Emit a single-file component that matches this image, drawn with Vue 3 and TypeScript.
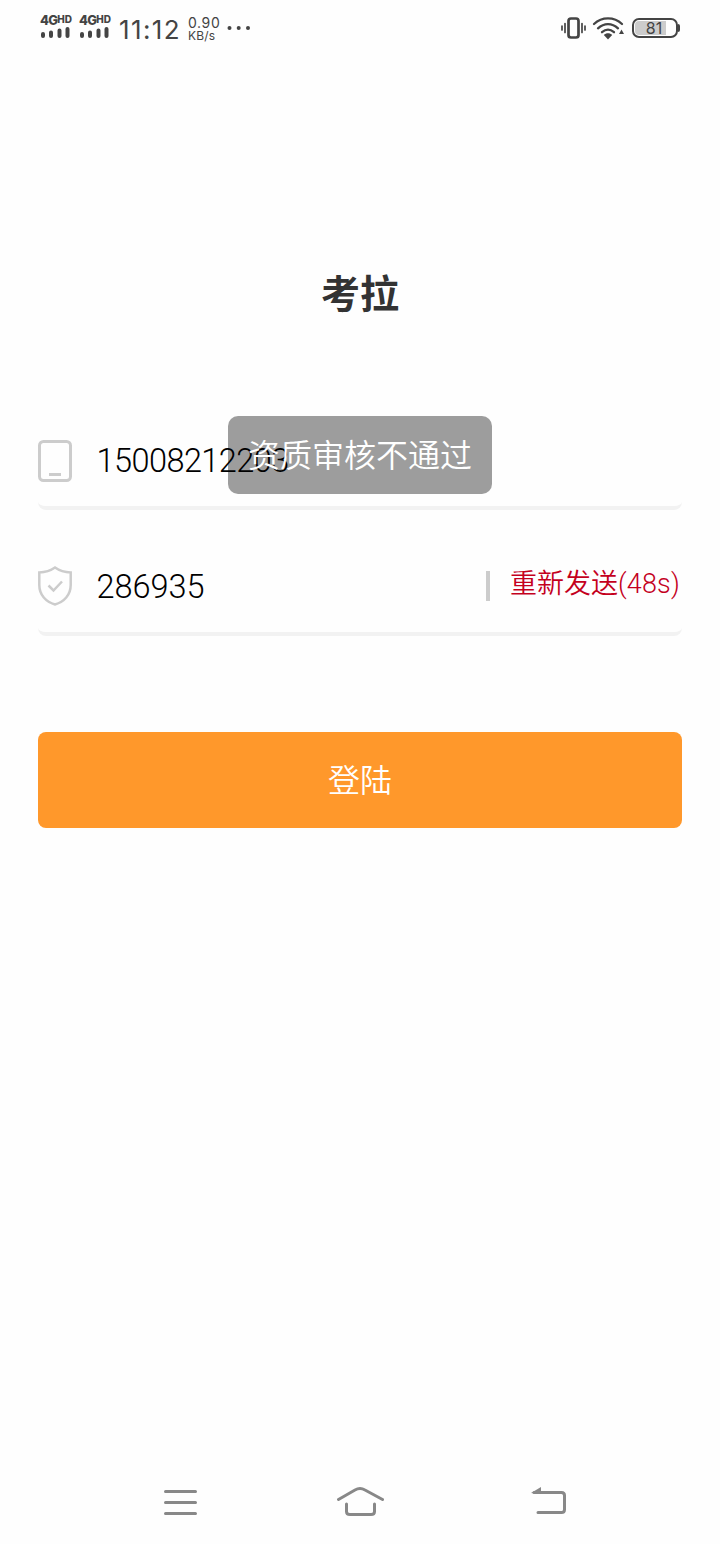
<script setup lang="ts">
import { ref } from 'vue'

const phone = ref('15008212203')
const code = ref('286935')
const secondsLeft = ref(48)
const toast = ref('资质审核不通过')
const sims = [1, 2]
</script>

<template>
  <div class="screen">
    <header class="status">
      <div v-for="sim in sims" :key="sim" class="sim">
        <div class="net">4G<span>HD</span></div>
        <svg width="30" height="14" viewBox="0 0 30 14" fill="none" stroke="#444" stroke-width="4" stroke-linecap="round">
          <path d="M3 9v2M11 7.500v3.500M19.500 5.500v5.500M27.500 4v7" />
        </svg>
      </div>
      <div class="clock">11:12</div>
      <div class="speed"><span class="rate">0.90</span><span class="unit">KB/s</span></div>
      <svg class="dots" width="24" height="6" viewBox="0 0 24 6" fill="#444">
        <circle cx="2.500" cy="3" r="2" /><circle cx="11.700" cy="3" r="2" /><circle cx="21" cy="3" r="2" />
      </svg>
      <svg class="indicators" width="66" height="26" viewBox="0 0 66 26" fill="none" stroke="#444">
        <rect x="8.500" y="3.500" width="10" height="19" rx="2.500" stroke-width="2.700" />
        <path d="M2 11v4M5 8.500v9M22 8.500v9M25 11v4" stroke-width="1.700" stroke-linecap="round" />
        <path d="M34 9C42 1.500 54 1.500 62 9M38 13.300C44 7.600 52 7.600 58 13.300M42 17.200C46 13.700 50 13.700 54 17.200" stroke-width="2.300" stroke-linecap="round" />
        <path d="M43.800 20C46 17.500 50 17.500 52.200 20L48 24.500z" fill="#444" stroke="none" />
        <path d="M61.500 14.500l2.500 4.500h-5z" fill="#444" stroke="none" />
      </svg>
      <div class="battery"><div class="cell"><div class="charge"></div><span>81</span></div><i></i></div>
    </header>

    <main>
      <h1>考拉</h1>
      <section class="field">
        <svg class="icon" width="34" height="42" viewBox="0 0 34 42" fill="none" stroke="#ccc" stroke-width="3">
          <rect x="1.500" y="1.500" width="31" height="39" rx="4" /><path d="M11 34.500h12" />
        </svg>
        <span class="value phone">{{ phone }}</span>
      </section>
      <section class="field">
        <svg class="icon shield" width="34" height="40" viewBox="0 0 34 40" fill="none" stroke="#ccc" stroke-width="2.500">
          <path d="M17 1.500C12 5 7 6.300 1.300 6.500V19C1.300 29 8 36 17 38.500C26 36 32.700 29 32.700 19V6.500C27 6.300 22 5 17 1.500z" />
          <path d="M10.500 19.500l5 5L24 15.500" />
        </svg>
        <span class="value code">{{ code }}</span>
        <i class="divider"></i>
        <span class="resend">重新发送<b>({{ secondsLeft }}s)</b></span>
      </section>
      <button class="login" type="button">登陆</button>
    </main>

    <div class="toast">{{ toast }}</div>

    <nav class="nav">
      <svg class="menu" width="34" height="28" viewBox="0 0 34 28"><path d="M1.500 2.500h30M1.500 13.500h30M1.500 24.500h30" /></svg>
      <svg class="home" width="48" height="32" viewBox="0 0 48 32">
        <path d="M2.500 14.500L19 5Q24 2 29 5L46.500 14.500M10.500 19V26.500Q10.500 29.500 14 29.500H35Q38.500 29.500 38.500 26.500V19" />
      </svg>
      <svg class="back" width="36" height="28" viewBox="0 0 36 28">
        <path d="M3 5.500H30.500Q33.500 5.500 33.500 8.500V22.500Q33.500 25.500 30.500 25.500H7" /><path class="solid" d="M0 6L10 0V7z" />
      </svg>
    </nav>
  </div>
</template>

<style>
body { margin: 0; background: #fefefe; }
</style>

<style scoped>
.screen {
  position: relative;
  display: flex;
  flex-direction: column;
  width: 720px;
  height: 1544px;
  background: #fefefe;
  overflow: hidden;
  font-family: Roboto, "Noto Sans CJK SC", sans-serif;
  font-weight: 300;
}
.status {
  display: flex;
  box-sizing: border-box;
  height: 56px;
  padding: 14px 40px 0;
  color: #444;
}
.sim { width: 39px; flex: none; }
.sim svg { display: block; margin-top: -1px; }
.net { height: 12px; font: 800 13px/12px Inter, sans-serif; letter-spacing: -.7px; white-space: nowrap; }
.net span { font-size: 10px; letter-spacing: 0; position: relative; top: -2px; }
.clock { width: 69px; flex: none; font: 400 26px/32px Inter, sans-serif; letter-spacing: 1.4px; text-indent: 1px; white-space: nowrap; }
.speed { display: flex; flex-direction: column; width: 40px; flex: none; padding-left: 1px; margin-right: -1px; box-sizing: border-box; font-family: Inter, sans-serif; font-weight: 400; }
.rate { font-size: 14px; line-height: 17px; letter-spacing: .6px; }
.unit { font-size: 12px; line-height: 9px; letter-spacing: .2px; }
.dots { margin: 11px 0 0 1px; }
.indicators { margin: 1px 0 0 auto; }
.battery { display: flex; align-items: center; height: 20px; margin: 4px 0 0 6px; }
.cell {
  position: relative;
  box-sizing: border-box;
  width: 46px;
  height: 20px;
  border: 2px solid #444;
  border-radius: 7px;
  padding: 1px;
}
.charge { width: 31px; height: 14px; border-radius: 4px 0 0 4px; background: #ccc; }
.cell span { position: absolute; inset: 0 2px 0 0; font: 400 16px/16px Inter, sans-serif; text-align: center; }
.battery i { width: 2px; height: 8px; border-radius: 0 2px 2px 0; background: #444; }
main { padding: 0 38px; }
h1 { margin: 211px 0 0; height: 56px; font-size: 39px; line-height: 56px; font-weight: 700; text-align: center; color: #333; }
.field {
  display: flex;
  align-items: center;
  box-sizing: border-box;
  height: 98px;
  border-bottom: 4px solid #f2f2f2;
  border-radius: 8px;
}
h1 + .field { margin-top: 89px; }
.field + .field { margin-top: 28px; }
.icon { flex: none; margin-top: 4px; }
.icon.shield { margin-top: 2px; }
.value { margin: 4px 0 0 24.500px; font-size: 32.500px; line-height: 40px; color: #000; }
.phone { letter-spacing: -.55px; }
.code { letter-spacing: -.05px; }
.divider { width: 4px; height: 30px; margin: 2px 20px 0 auto; background: #ccc; }
.resend { margin: -2px 2px 0 0; font-size: 27px; font-weight: 350; line-height: 40px; color: #c4001d; white-space: nowrap; }
.resend b { font-weight: 300; letter-spacing: .2px; }
.login {
  display: block;
  width: 100%;
  height: 96px;
  margin-top: 96px;
  padding: 0 0 5px;
  border: 0;
  border-radius: 8px;
  background: #ff982b;
  color: #fff;
  font: 350 32px/90px "Noto Sans CJK SC", sans-serif;
}
.toast {
  position: absolute;
  left: 228px;
  top: 416px;
  width: 264px;
  height: 78px;
  border-radius: 10px;
  background: rgba(0, 0, 0, .38);
  color: #fff;
  font-size: 32px;
  font-weight: 350;
  line-height: 80px;
  text-align: center;
}
.nav {
  display: grid;
  grid-template-columns: repeat(3, 188px);
  justify-content: center;
  justify-items: center;
  align-items: center;
  height: 42px;
  margin-top: auto;
  padding-bottom: 21px;
}
.nav .menu { margin: 2px 0 0 18px; }
.nav .home { margin-bottom: 2px; }
.nav .back { margin: 0 0 2px 2px; }
.nav path { fill: none; stroke: #888; stroke-width: 3; stroke-linecap: round; stroke-linejoin: round; }
.nav .solid { fill: #888; stroke: none; }
</style>
